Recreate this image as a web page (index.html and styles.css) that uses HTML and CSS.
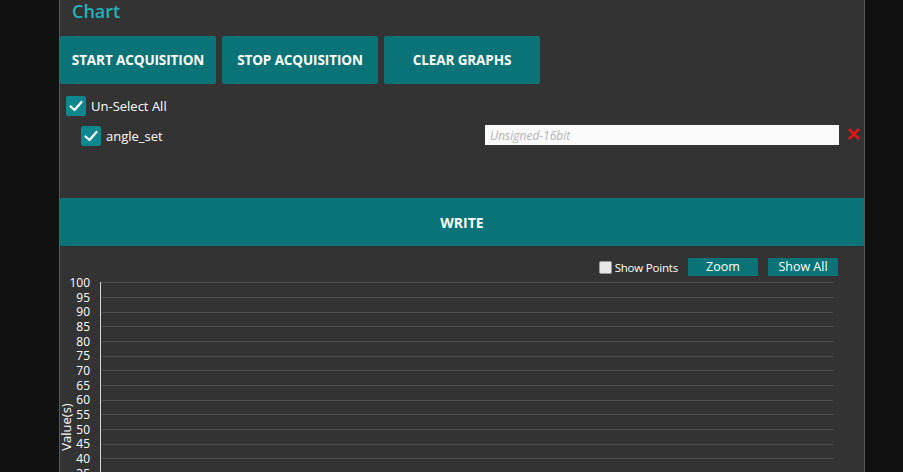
FILE: index.html
```html
<!DOCTYPE html>
<html>
<head>
<meta charset="utf-8">
<link rel="stylesheet" href="styles.css">
</head>
<body>
<div class="panel">
  <h2 class="title">Chart</h2>
  <div class="actions">
    <button class="btn">START ACQUISITION</button>
    <button class="btn">STOP ACQUISITION</button>
    <button class="btn">CLEAR GRAPHS</button>
  </div>
  <div class="select-all">
    <span class="check"><svg viewBox="0 0 20 20" width="20" height="20"><path d="M4.5 10.5 L8.5 14 L15.5 6" fill="none" stroke="#fff" stroke-width="2.2" stroke-linecap="round" stroke-linejoin="round"/></svg></span>
    <span class="check-label">Un-Select All</span>
  </div>
  <div class="var-row">
    <span class="check"><svg viewBox="0 0 20 20" width="20" height="20"><path d="M4.5 10.5 L8.5 14 L15.5 6" fill="none" stroke="#fff" stroke-width="2.2" stroke-linecap="round" stroke-linejoin="round"/></svg></span>
    <span class="check-label">angle_set</span>
    <input class="value-input" type="text" placeholder="Unsigned-16bit">
    <span class="remove"><svg viewBox="0 0 14 14" width="14" height="14"><path d="M2 2 L12 12 M12 2 L2 12" stroke="#e51515" stroke-width="2.6"/></svg></span>
  </div>
  <button class="write">WRITE</button>
  <div class="chart">
    <div class="chart-tools">
      <label class="points"><span class="box"></span>Show Points</label>
      <button class="tool-btn">Zoom</button>
      <button class="tool-btn">Show All</button>
    </div>
    <svg class="plot" width="806" height="200" viewBox="0 0 806 200">
      <g class="grid">
        <line x1="42" y1="6.5" x2="776" y2="6.5"/>
        <line x1="42" y1="21.5" x2="776" y2="21.5"/>
        <line x1="42" y1="36.5" x2="776" y2="36.5"/>
        <line x1="42" y1="50.5" x2="776" y2="50.5"/>
        <line x1="42" y1="65.5" x2="776" y2="65.5"/>
        <line x1="42" y1="80.5" x2="776" y2="80.5"/>
        <line x1="42" y1="94.5" x2="776" y2="94.5"/>
        <line x1="42" y1="109.5" x2="776" y2="109.5"/>
        <line x1="42" y1="124.5" x2="776" y2="124.5"/>
        <line x1="42" y1="138.5" x2="776" y2="138.5"/>
        <line x1="42" y1="153.5" x2="776" y2="153.5"/>
        <line x1="42" y1="168.5" x2="776" y2="168.5"/>
        <line x1="42" y1="182.5" x2="776" y2="182.5"/>
        <line x1="42" y1="197.5" x2="776" y2="197.5"/>
      </g>
      <line class="axis" x1="42.5" y1="6" x2="42.5" y2="200"/>
      <g class="ticks">
        <text x="32" y="10.5">100</text>
        <text x="32" y="25.5">95</text>
        <text x="32" y="40">90</text>
        <text x="32" y="54.5">85</text>
        <text x="32" y="69.5">80</text>
        <text x="32" y="84">75</text>
        <text x="32" y="98.5">70</text>
        <text x="32" y="113.5">65</text>
        <text x="32" y="128">60</text>
        <text x="32" y="142.5">55</text>
        <text x="32" y="157.5">50</text>
        <text x="32" y="172">45</text>
        <text x="32" y="186.5">40</text>
        <text x="32" y="201.5">35</text>
      </g>
      <text class="axis-title" transform="translate(12.5 151) rotate(-90)">Value(s)</text>
    </svg>
  </div>
</div>
</body>
</html>
```

FILE: styles.css
```css
html, body {
  margin: 0;
  padding: 0;
  background: #111111;
  height: 100%;
  overflow: hidden;
}

body {
  font-family: "Open Sans", "Noto Sans", sans-serif;
  color: #ffffff;
}

.panel {
  margin-left: 59px;
  width: 804px;
  min-height: 472px;
  background: #333333;
  border-left: 1px solid #5a5a5a;
  border-right: 1px solid #5a5a5a;
  display: flex;
  flex-direction: column;
}

.title {
  margin: 0;
  padding: 0 0 0 12px;
  height: 36px;
  font-size: 18px;
  font-weight: 600;
  line-height: 22px;
  color: #1fb3bb;
}

.actions {
  display: flex;
  gap: 6px;
}

.btn {
  width: 156px;
  height: 48px;
  border: none;
  border-radius: 2px;
  background: #0a7377;
  color: #ffffff;
  font-family: "Open Sans", sans-serif;
  font-weight: 700;
  font-size: 13.5px;
  padding: 0;
  letter-spacing: -0.1px;
}

.check {
  display: inline-flex;
  width: 20px;
  height: 20px;
  border-radius: 2px;
  background: #0e878e;
  flex: none;
}

.check-label {
  font-size: 13px;
  color: #ffffff;
}

.select-all {
  display: flex;
  align-items: center;
  gap: 5px;
  margin-top: 12px;
  padding-left: 6px;
  height: 20px;
}

.var-row {
  display: flex;
  align-items: center;
  gap: 5px;
  margin-top: 10px;
  padding-left: 21px;
  height: 20px;
}

.var-row .check-label {
  width: 374px;
}

.value-input {
  box-sizing: border-box;
  width: 354px;
  height: 20px;
  margin: -2px 0 0 0;
  border: none;
  background: #fafafa;
  padding: 0 5px;
  font-family: "Open Sans", sans-serif;
  font-size: 12px;
  font-style: italic;
  outline: none;
}

.value-input::placeholder {
  color: #b4b4b4;
}

.remove {
  display: inline-flex;
  margin: -4px 0 0 3px;
}

.write {
  margin-top: 52px;
  height: 48px;
  width: 100%;
  border: none;
  border-radius: 2px 0 0 2px;
  background: #0a7377;
  color: #ffffff;
  font-family: "Open Sans", sans-serif;
  font-weight: 700;
  font-size: 14px;
  padding: 0;
}

.chart {
  display: flex;
  flex-direction: column;
}

.chart-tools {
  display: flex;
  align-items: center;
  justify-content: flex-end;
  gap: 10px;
  padding-right: 26px;
  margin-top: 12px;
  height: 18px;
}

.points {
  display: flex;
  align-items: center;
  font-size: 11.5px;
  letter-spacing: -0.2px;
  color: #ffffff;
}

.box {
  box-sizing: border-box;
  width: 13px;
  height: 13px;
  margin-right: 3px;
  border: 1px solid #9a9a9a;
  border-radius: 2px;
  background: #e6e6e6;
}

.tool-btn {
  width: 70px;
  height: 18px;
  border: none;
  border-radius: 1px;
  background: #0a7377;
  color: #ffffff;
  font-family: "Open Sans", sans-serif;
  font-size: 12.5px;
  padding: 0;
  line-height: 18px;
}

.plot {
  display: block;
  margin: 0 0 0 -2px;
}

.grid line {
  stroke: #4e4e4e;
  stroke-width: 1;
}

.axis {
  stroke: #d8d8d8;
  stroke-width: 1;
}

.ticks text {
  fill: #ffffff;
  font-family: "Open Sans", sans-serif;
  font-size: 12px;
  text-anchor: end;
}

.axis-title {
  fill: #ffffff;
  font-family: "Open Sans", sans-serif;
  font-size: 13px;
  text-anchor: middle;
}
```
